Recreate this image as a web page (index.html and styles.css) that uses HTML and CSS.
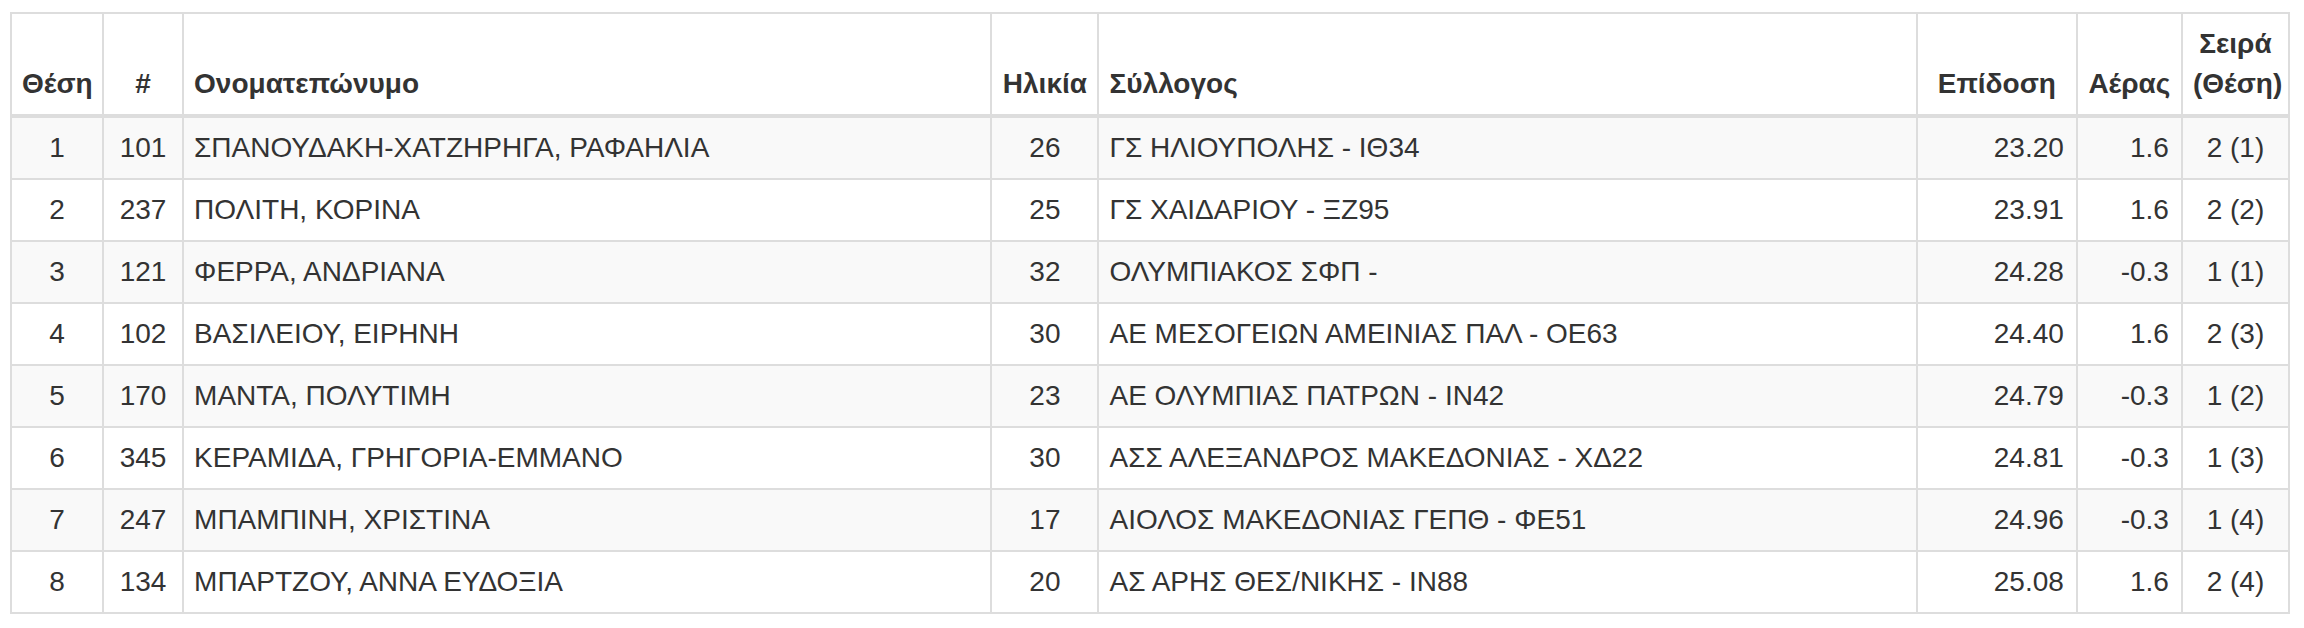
FILE: index.html
```html
<!DOCTYPE html>
<html lang="el">
<head>
<meta charset="utf-8">
<title>Αποτελέσματα</title>
<link rel="stylesheet" href="styles.css">
</head>
<body>
<div class="wrap">
<table class="results">
<colgroup>
<col class="c-pos"><col class="c-bib"><col class="c-name"><col class="c-age"><col class="c-club"><col class="c-perf"><col class="c-wind"><col class="c-heat">
</colgroup>
<thead>
<tr>
<th class="center">Θέση</th>
<th class="center">#</th>
<th class="left">Ονοματεπώνυμο</th>
<th class="center">Ηλικία</th>
<th class="left">Σύλλογος</th>
<th class="center">Επίδοση</th>
<th class="center">Αέρας</th>
<th class="center">Σειρά<br>(Θέση)</th>
</tr>
</thead>
<tbody>
<tr><td class="center">1</td><td class="center">101</td><td>ΣΠΑΝΟΥΔΑΚΗ-ΧΑΤΖΗΡΗΓΑ, ΡΑΦΑΗΛΙΑ</td><td class="center">26</td><td>ΓΣ ΗΛΙΟΥΠΟΛΗΣ - ΙΘ34</td><td class="num">23.20</td><td class="num">1.6</td><td class="center">2 (1)</td></tr>
<tr><td class="center">2</td><td class="center">237</td><td>ΠΟΛΙΤΗ, ΚΟΡΙΝΑ</td><td class="center">25</td><td>ΓΣ ΧΑΙΔΑΡΙΟΥ - ΞΖ95</td><td class="num">23.91</td><td class="num">1.6</td><td class="center">2 (2)</td></tr>
<tr><td class="center">3</td><td class="center">121</td><td>ΦΕΡΡΑ, ΑΝΔΡΙΑΝΑ</td><td class="center">32</td><td>ΟΛΥΜΠΙΑΚΟΣ ΣΦΠ -</td><td class="num">24.28</td><td class="num">-0.3</td><td class="center">1 (1)</td></tr>
<tr><td class="center">4</td><td class="center">102</td><td>ΒΑΣΙΛΕΙΟΥ, ΕΙΡΗΝΗ</td><td class="center">30</td><td>ΑΕ ΜΕΣΟΓΕΙΩΝ ΑΜΕΙΝΙΑΣ ΠΑΛ - ΟΕ63</td><td class="num">24.40</td><td class="num">1.6</td><td class="center">2 (3)</td></tr>
<tr><td class="center">5</td><td class="center">170</td><td>ΜΑΝΤΑ, ΠΟΛΥΤΙΜΗ</td><td class="center">23</td><td>ΑΕ ΟΛΥΜΠΙΑΣ ΠΑΤΡΩΝ - ΙΝ42</td><td class="num">24.79</td><td class="num">-0.3</td><td class="center">1 (2)</td></tr>
<tr><td class="center">6</td><td class="center">345</td><td>ΚΕΡΑΜΙΔΑ, ΓΡΗΓΟΡΙΑ-ΕΜΜΑΝΟ</td><td class="center">30</td><td>ΑΣΣ ΑΛΕΞΑΝΔΡΟΣ ΜΑΚΕΔΟΝΙΑΣ - ΧΔ22</td><td class="num">24.81</td><td class="num">-0.3</td><td class="center">1 (3)</td></tr>
<tr><td class="center">7</td><td class="center">247</td><td>ΜΠΑΜΠΙΝΗ, ΧΡΙΣΤΙΝΑ</td><td class="center">17</td><td>ΑΙΟΛΟΣ ΜΑΚΕΔΟΝΙΑΣ ΓΕΠΘ - ΦΕ51</td><td class="num">24.96</td><td class="num">-0.3</td><td class="center">1 (4)</td></tr>
<tr><td class="center">8</td><td class="center">134</td><td>ΜΠΑΡΤΖΟΥ, ΑΝΝΑ ΕΥΔΟΞΙΑ</td><td class="center">20</td><td>ΑΣ ΑΡΗΣ ΘΕΣ/ΝΙΚΗΣ - ΙΝ88</td><td class="num">25.08</td><td class="num">1.6</td><td class="center">2 (4)</td></tr>
</tbody>
</table>
</div>
</body>
</html>
```

FILE: styles.css
```css
html, body {
  margin: 0;
  padding: 0;
  background: #ffffff;
}

body {
  font-family: "Liberation Sans", Arial, Helvetica, sans-serif;
  font-size: 28px;
  line-height: 40px;
  color: #333333;
}

.wrap {
  padding: 12px 14px 0 10px;
}

.results {
  width: 100%;
  table-layout: fixed;
  border-collapse: collapse;
  border-spacing: 0;
  border: 2px solid #dddddd;
}

.c-pos { width: 92px; }
.c-bib { width: 80px; }
.c-name { width: 808px; }
.c-age { width: 107px; }
.c-club { width: 818px; }
.c-perf { width: 160px; }
.c-wind { width: 105px; }
.c-heat { width: 107px; }

.results th,
.results td {
  padding: 10px;
  border: 2px solid #dddddd;
  white-space: nowrap;
}

.results th {
  font-weight: bold;
  vertical-align: bottom;
  border-bottom-width: 4px;
}

.results td {
  vertical-align: top;
  text-align: left;
}

.results tbody tr:nth-child(odd) td {
  background: #f9f9f9;
}

.results .center { text-align: center; }
.results .left { text-align: left; }
.results .num { text-align: right; padding-right: 12px; }
```
